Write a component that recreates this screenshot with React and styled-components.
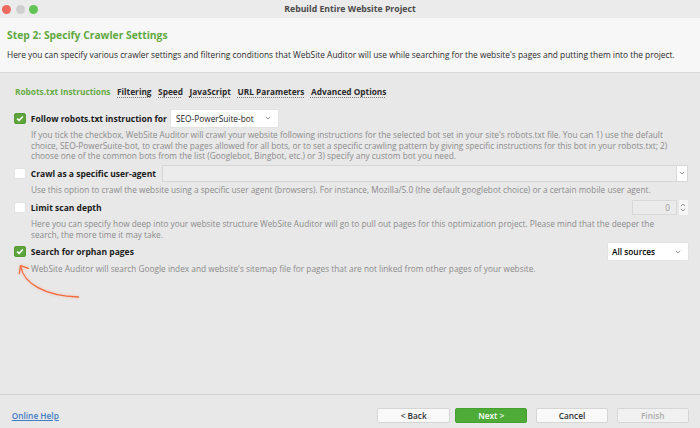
import React from "react";
import styled, { createGlobalStyle } from "styled-components";

const GlobalStyle = createGlobalStyle`
  html, body {
    margin: 0;
    padding: 0;
    background: #e8e8e8;
  }
  body {
    font-family: "Open Sans", "DejaVu Sans", sans-serif;
    -webkit-font-smoothing: antialiased;
  }
`;

const Chevron = ({ up }) => (
  <svg width="6" height="4" viewBox="0 0 6 4">
    <polyline
      points={up ? "0.8,3.2 3,1 5.2,3.2" : "0.8,0.8 3,3 5.2,0.8"}
      fill="none"
      stroke="#8a8a8a"
      strokeWidth="0.9"
    />
  </svg>
);

const CheckMark = () => (
  <svg width="8" height="7" viewBox="0 0 8 7">
    <polyline points="1.2,3.6 3.1,5.4 6.8,1.4" fill="none" stroke="#fff" strokeWidth="1.5" />
  </svg>
);

const App = () => {
  return (
    <Window>
      <GlobalStyle />
      <TitleBar>
        <Lights>
          <Light color="#ee6a5f" />
          <Light color="#cfcfcf" />
          <Light color="#61c454" />
        </Lights>
        <WindowTitle>Rebuild Entire Website Project</WindowTitle>
        <span />
      </TitleBar>

      <Header>
        <StepTitle>Step 2: Specify Crawler Settings</StepTitle>
        <StepText>
          Here you can specify various crawler settings and filtering conditions that WebSite Auditor will use while searching for the website's pages and putting them into the project.
        </StepText>
      </Header>

      <Body>
        <Tabs>
          <Tab active>Robots.txt Instructions</Tab>
          <Tab>Filtering</Tab>
          <Tab>Speed</Tab>
          <Tab>JavaScript</Tab>
          <Tab>URL Parameters</Tab>
          <Tab>Advanced Options</Tab>
        </Tabs>

        <Options>
          <Option>
            <OptionRow>
              <Check checked>
                <CheckMark />
              </Check>
              <Label>Follow robots.txt instruction for</Label>
              <Select width="107px" ml="4.5px">
                <SelectText>SEO-PowerSuite-bot</SelectText>
                <Chevron />
              </Select>
            </OptionRow>
            <Desc>
              If you tick the checkbox, WebSite Auditor will crawl your website following instructions for the selected bot set in your site's robots.txt file. You can 1) use the default
              <br />
              choice, SEO-PowerSuite-bot, to crawl the pages allowed for all bots, or to set a specific crawling pattern by giving specific instructions for this bot in your robots.txt; 2)
              <br />
              choose one of the common bots from the list (Googlebot, Bingbot, etc.) or 3) specify any custom bot you need.
            </Desc>
          </Option>

          <Option>
            <OptionRow>
              <Check />
              <Label>Crawl as a specific user-agent</Label>
              <TextField />
              <FieldButton>
                <Chevron />
              </FieldButton>
            </OptionRow>
            <Desc>
              Use this option to crawl the website using a specific user agent (browsers). For instance, Mozilla/5.0 (the default googlebot choice) or a certain mobile user agent.
            </Desc>
          </Option>

          <Option>
            <OptionRow>
              <Check />
              <Label>Limit scan depth</Label>
              <NumberField>0</NumberField>
              <Spinner>
                <Chevron up />
                <Chevron />
              </Spinner>
            </OptionRow>
            <Desc>
              Here you can specify how deep into your website structure WebSite Auditor will go to pull out pages for this optimization project. Please mind that the deeper the
              <br />
              search, the more time it may take.
            </Desc>
          </Option>

          <Option>
            <OptionRow>
              <Check checked>
                <CheckMark />
              </Check>
              <Label>Search for orphan pages</Label>
              <Select width="80px" ml="auto">
                <SelectText dark>All sources</SelectText>
                <Chevron />
              </Select>
            </OptionRow>
            <Desc>
              WebSite Auditor will search Google index and website's sitemap file for pages that are not linked from other pages of your website.
            </Desc>
          </Option>
        </Options>
      </Body>

      <Footer>
        <HelpLink>Online Help</HelpLink>
        <Buttons>
          <NavGroup>
            <Button>&lt; Back</Button>
            <Button variant="primary">Next &gt;</Button>
          </NavGroup>
          <Button>Cancel</Button>
          <Button variant="disabled">Finish</Button>
        </Buttons>
      </Footer>

      <ArrowOverlay width="700" height="428" viewBox="0 0 700 428">
        <path d="M21 267.5 C24 283, 44 296, 78.5 297" fill="none" stroke="#f26a3d" strokeWidth="1.3" strokeLinecap="round" />
        <path d="M19.3 273.5 L20.6 265.6 L28.4 268.4" fill="none" stroke="#f26a3d" strokeWidth="1.3" strokeLinecap="round" strokeLinejoin="round" />
      </ArrowOverlay>
    </Window>
  );
};

const Window = styled.div`
  position: relative;
  display: flex;
  flex-direction: column;
  width: 700px;
  height: 428px;
  overflow: hidden;
  background: #e8e8e8;
  color: #1e1e1e;
`;

const TitleBar = styled.div`
  display: grid;
  grid-template-columns: 1fr auto 1fr;
  align-items: center;
  height: 18px;
  flex-shrink: 0;
  background: #ebebeb;
`;

const Lights = styled.div`
  display: flex;
  gap: 4.5px;
  padding-left: 2.2px;
`;

const Light = styled.span`
  width: 9px;
  height: 9px;
  border-radius: 50%;
  background: ${(p) => p.color};
`;

const WindowTitle = styled.div`
  font-size: 8.7px;
  font-weight: 700;
  color: #4a4a4a;
  white-space: nowrap;
`;

const Header = styled.div`
  display: flex;
  flex-direction: column;
  height: 55px;
  flex-shrink: 0;
  box-sizing: border-box;
  padding: 9.5px 7px 0;
  background: #f7f7f7;
  border-bottom: 1px solid #d9d9d9;
`;

const StepTitle = styled.div`
  font-size: 10.3px;
  line-height: 14px;
  font-weight: 700;
  color: #62a83f;
  white-space: nowrap;
`;

const StepText = styled.div`
  margin-top: 8px;
  font-size: 8.35px;
  line-height: 10px;
  color: #2a2a2a;
  white-space: nowrap;
`;

const Body = styled.div`
  display: flex;
  flex-direction: column;
  flex: 1;
  padding: 12.8px 12.5px 0 14.3px;
`;

const Tabs = styled.div`
  display: flex;
  gap: 6.5px;
  padding-left: 0.7px;
  height: 11px;
`;

const Tab = styled.span`
  font-size: 8.3px;
  line-height: 11px;
  font-weight: 700;
  white-space: nowrap;
  color: ${(p) => (p.active ? "#67ab45" : "#2b2b2b")};
  text-decoration: ${(p) => (p.active ? "none" : "underline dotted #777")};
  text-underline-offset: 2px;
`;

const Options = styled.div`
  display: flex;
  flex-direction: column;
  gap: 2.5px;
  margin-top: 12.5px;
`;

const Option = styled.div`
  display: flex;
  flex-direction: column;
`;

const OptionRow = styled.div`
  display: flex;
  align-items: center;
  height: 18px;
`;

const Check = styled.span`
  display: flex;
  align-items: center;
  justify-content: center;
  width: 11.5px;
  height: 11px;
  flex-shrink: 0;
  box-sizing: border-box;
  border-radius: 2px;
  background: ${(p) => (p.checked ? "#5ea43c" : "#fff")};
  border: 1px solid ${(p) => (p.checked ? "#559a35" : "#e2e2e2")};
`;

const Label = styled.span`
  margin-left: 5px;
  font-size: 8.5px;
  font-weight: 700;
  color: #1a1a1a;
  white-space: nowrap;
`;

const Select = styled.div`
  display: flex;
  align-items: center;
  justify-content: space-between;
  width: ${(p) => p.width};
  height: 17px;
  margin-left: ${(p) => p.ml};
  box-sizing: border-box;
  padding: 0 7px 0 4.5px;
  background: #fff;
  border-radius: 1px;
  box-shadow: 0 0 0 0.5px #dedede;
`;

const SelectText = styled.span`
  font-size: 8.3px;
  color: ${(p) => (p.dark ? "#000" : "#222")};
  font-weight: ${(p) => (p.dark ? 600 : 400)};
  white-space: nowrap;
`;

const TextField = styled.div`
  flex: 1;
  height: 17.5px;
  margin-left: 6.5px;
  box-sizing: border-box;
  background: #ececec;
  border: 1px solid #d7d7d7;
`;

const FieldButton = styled.div`
  display: flex;
  align-items: center;
  justify-content: center;
  width: 10.5px;
  height: 17.5px;
  box-sizing: border-box;
  background: #fff;
  border: 1px solid #d7d7d7;
  border-left: none;
`;

const NumberField = styled.div`
  display: flex;
  align-items: center;
  justify-content: flex-end;
  width: 45px;
  height: 14.5px;
  margin-left: auto;
  box-sizing: border-box;
  padding-right: 6px;
  background: #ebebeb;
  border: 1px solid #d9d9d9;
  font-size: 8.3px;
  color: #9a9a9a;
`;

const Spinner = styled.div`
  display: flex;
  flex-direction: column;
  align-items: center;
  justify-content: center;
  gap: 1px;
  width: 9px;
  height: 14.5px;
  margin-left: 1.5px;
  background: #f6f6f6;
  border-radius: 1px;
`;

const Desc = styled.div`
  margin-top: 3px;
  padding-left: 16.7px;
  font-size: 8.3px;
  line-height: 10.5px;
  color: #8b8b8b;
  white-space: nowrap;
`;

const Footer = styled.div`
  display: flex;
  justify-content: space-between;
  align-items: flex-start;
  height: 34px;
  flex-shrink: 0;
  box-sizing: border-box;
  padding: 12.7px 11px 0 11.7px;
  border-top: 1px solid #d3d3d3;
`;

const HelpLink = styled.a`
  margin-top: 2px;
  font-size: 8.3px;
  line-height: 11px;
  font-weight: 600;
  color: #3f7cc4;
  text-decoration: underline;
  cursor: pointer;
`;

const Buttons = styled.div`
  display: flex;
  gap: 8.3px;
`;

const NavGroup = styled.div`
  display: flex;
  gap: 5px;
`;

const Button = styled.button`
  width: 72.5px;
  height: 15px;
  padding: 0;
  box-sizing: border-box;
  border-radius: 2px;
  font-family: inherit;
  font-size: 8.3px;
  font-weight: 600;
  cursor: pointer;
  background: ${(p) => (p.variant === "primary" ? "#4fab38" : p.variant === "disabled" ? "#f1f1f1" : "#f9f9f9")};
  color: ${(p) => (p.variant === "primary" ? "#fff" : p.variant === "disabled" ? "#ababab" : "#333")};
  border: 1px solid ${(p) => (p.variant === "primary" ? "#45a02f" : "#d6d6d6")};
`;

const ArrowOverlay = styled.svg`
  position: absolute;
  left: 0;
  top: 0;
  pointer-events: none;
  filter: drop-shadow(0 0 1.5px rgba(242, 106, 61, 0.35));
`;

export default App;
